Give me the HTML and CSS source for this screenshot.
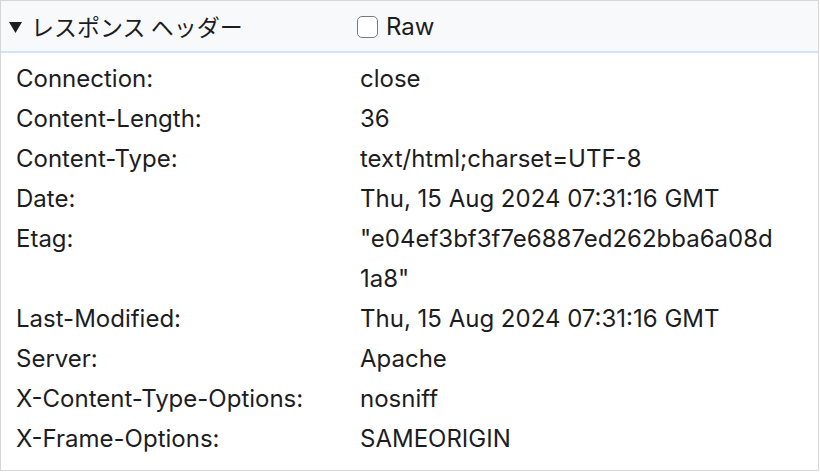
FILE: index.html
```html
<!DOCTYPE html>
<html lang="ja">
<head>
<meta charset="utf-8">
<link rel="stylesheet" href="styles.css">
</head>
<body>
<div class="panel">
  <div class="head">
    <div class="title"><svg class="tri" width="13" height="11" viewBox="0 0 13 11"><polygon points="0,0 13,0 6.5,11" fill="#1d1d1f"/></svg>レスポンス ヘッダー</div>
    <label class="raw"><span class="box"></span>Raw</label>
  </div>
  <div class="rows">
    <div class="row"><div class="k">Connection:</div><div class="v">close</div></div>
    <div class="row"><div class="k">Content-Length:</div><div class="v">36</div></div>
    <div class="row"><div class="k">Content-Type:</div><div class="v">text/html;charset=UTF-8</div></div>
    <div class="row"><div class="k">Date:</div><div class="v">Thu, 15 Aug 2024 07:31:16 GMT</div></div>
    <div class="row"><div class="k">Etag:</div><div class="v">"e04ef3bf3f7e6887ed262bba6a08d1a8"</div></div>
    <div class="row"><div class="k">Last-Modified:</div><div class="v">Thu, 15 Aug 2024 07:31:16 GMT</div></div>
    <div class="row"><div class="k">Server:</div><div class="v">Apache</div></div>
    <div class="row"><div class="k">X-Content-Type-Options:</div><div class="v">nosniff</div></div>
    <div class="row"><div class="k">X-Frame-Options:</div><div class="v">SAMEORIGIN</div></div>
  </div>
</div>
</body>
</html>
```
FILE: styles.css
```css
html, body {
  margin: 0;
  padding: 0;
  background: #ffffff;
}
body {
  font-family: Inter, "Noto Sans CJK JP", sans-serif;
  color: #1d1d1f;
}
.panel {
  width: 819px;
  height: 471px;
  box-sizing: border-box;
  border: 1px solid #d6d6d6;
  background: #ffffff;
}
.head {
  height: 50px;
  background: #f8f9fa;
  border-bottom: 2px solid #d3e2f7;
  display: flex;
  align-items: center;
}
.title {
  width: 345px;
  display: flex;
  align-items: center;
  font-family: "Noto Sans CJK JP", sans-serif;
  font-size: 23px;
  color: #1d1d1f;
}
.tri {
  flex: none;
  margin-left: 8px;
  margin-right: 9px;
  margin-top: 2px;
}
.raw {
  display: flex;
  align-items: center;
  font-size: 24px;
  color: #1d1d1f;
}
.box {
  box-sizing: border-box;
  width: 21px;
  height: 22px;
  border: 1.5px solid #7a7a7a;
  border-radius: 5px;
  background: #fff;
  margin-left: 11px;
  margin-right: 8px;
  margin-top: 2px;
}
.rows {
  padding-top: 6px;
}
.row {
  display: flex;
  font-size: 24px;
  line-height: 40px;
}
.k {
  width: 344px;
  padding-left: 15px;
  flex: none;
}
.v {
  width: 420px;
  word-break: break-all;
}
```
